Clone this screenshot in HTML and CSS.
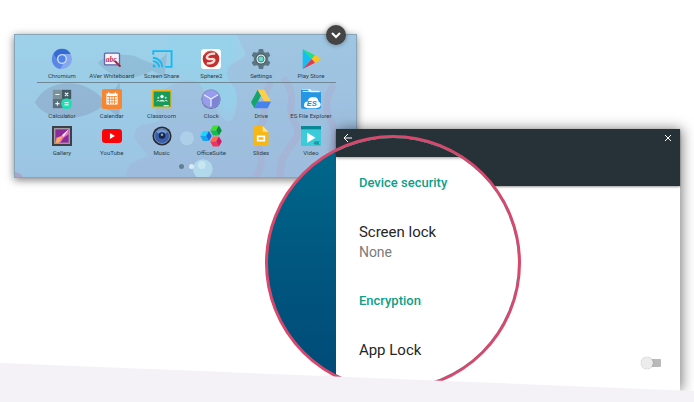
FILE: index.html
```html
<!DOCTYPE html>
<html lang="en">
<head>
    <meta charset="UTF-8">
    <meta name="viewport" content="width=device-width, initial-scale=1.0">
    <title>App launcher and device security</title>
    <link rel="stylesheet" href="styles.css">
</head>
<body>
    <main class="stage">
        <!-- App launcher -->
        <section class="launcher">
            <svg class="wallpaper" viewBox="0 0 343 143" preserveAspectRatio="none" aria-hidden="true">
                <path d="M150 0H223L220 22Q210 40 224 45Q226 78 212 78Q205 58 186 52L160 34Z" fill="#8fd3ee" opacity=".35"/>
                <path d="M223 0H343V143H112C112 125 125 128 134 121C128 112 118 108 121 97C125 87 139 92 146 85C132 68 150 48 174 46C190 44 187 58 198 64C208 88 220 98 223 70C226 46 209 50 214 34C219 24 239 26 229 12Z" fill="#a5a9cf" opacity=".28"/>
                <path d="M20 68C32 44 68 42 88 64Q98 61 105 47Q108 66 104 84Q98 75 86 73C66 88 32 88 20 68Z" fill="#7f8bb0" opacity=".33"/>
                <path d="M83 28Q94 17 120 21Q134 28 139 29Q146 26 153 18Q152 34 150 44Q144 38 138 36Q106 53 83 28Z" fill="#7394b4" opacity=".28"/>
                <g fill="none" stroke="#bd93b9" stroke-width="7" opacity=".2">
                    <path d="M258 48C245 64 254 75 250 86C240 102 242 105 246 116Q251 130 242 143"/>
                    <path d="M270 43C287 64 271 70 281 88C296 105 264 112 267 143"/>
                    <path d="M321 50Q308 70 318 86Q326 105 317 118"/>
                </g>
                <circle cx="173" cy="104" r="7" fill="#b5dced" opacity=".6"/>
                <circle cx="189" cy="135" r="10" fill="#b5deee" opacity=".8"/>
                <circle cx="188" cy="131" r="4" fill="#e0f3f8" opacity=".5"/>
                <path d="M0 138Q6 139 8 143H0Z" fill="#a9a6c8"/>
            </svg>

            <button class="collapse" aria-label="Close launcher">
                <svg viewBox="0 0 20 20"><path d="M6 8l4 4 4-4" fill="none" stroke="#fff" stroke-width="2"/></svg>
            </button>

            <div class="apps favorites">
                <a class="app" href="#chromium">
                    <svg viewBox="0 0 24 24">
                        <circle cx="12" cy="12" r="12" fill="#85a7ed"/>
                        <path d="M1.5 6A12 12 0 0 1 22.5 6H12A6 6 0 0 0 6 13Z" fill="#376bd4"/>
                        <path d="M1.5 6L6.8 15A6 6 0 0 0 13 18L10 24A12 12 0 0 1 1.5 6Z" fill="#5a87e3"/>
                        <circle cx="12" cy="12" r="5.8" fill="#dce8fc"/>
                        <circle cx="12" cy="12" r="4.4" fill="#5082e8"/>
                    </svg>
                    <span>Chromium</span>
                </a>
                <a class="app" href="#whiteboard">
                    <svg viewBox="0 0 24 24">
                        <rect x="3" y="5" width="18" height="14" rx="1" fill="#f5f2fb" stroke="#6366a9" stroke-width="1.6"/>
                        <text x="4.5" y="15" class="abc">abc</text>
                        <path d="M15.5 14.5l6.5 6.5" stroke="#bd2634" stroke-width="2.6"/>
                        <path d="M15 14l2 2M20 19l2 2" stroke="#592c39"/>
                    </svg>
                    <span>AVer Whiteboard</span>
                </a>
                <a class="app" href="#share">
                    <svg viewBox="0 0 24 24" fill="none" stroke="#12baf4" stroke-width="2.2">
                        <path d="M1.5 7V2.5h22v19H16"/>
                        <path d="M1 10.5A11.5 11.5 0 0 1 12.5 22M1 14.5A7.5 7.5 0 0 1 8.5 22"/>
                        <path d="M1 22v-3.5A3.5 3.5 0 0 1 4.5 22Z" fill="#12baf4" stroke="none"/>
                    </svg>
                    <span>Screen Share</span>
                </a>
                <a class="app" href="#sphere">
                    <svg viewBox="0 0 24 24">
                        <rect width="24" height="24" rx="4" fill="#fff"/>
                        <circle cx="12" cy="12" r="10" fill="#c52c2c"/>
                        <path d="M17 5.5Q8 5 7 10Q8 13 14 12Q18 13 14.5 16Q11 18 7 17" fill="none" stroke="#f9ded8" stroke-width="2.8"/>
                        <path d="M4 7Q9 1 15 3" fill="none" stroke="#e97865"/>
                    </svg>
                    <span>Sphere2</span>
                </a>
                <a class="app" href="#settings">
                    <svg viewBox="0 0 24 24">
                        <path d="M9.5 0h5l.8 3.5 2 1.1 3.5-1.1 2.4 4.3-2.6 2.5v3.4l2.6 2.5-2.4 4.3-3.5-1.1-2 1.1-.8 3.5h-5l-.8-3.5-2-1.1-3.5 1.1-2.4-4.3 2.6-2.5v-3.4L.8 7.8l2.4-4.3 3.5 1.1 2-1.1Z" fill="#5b7581"/>
                        <circle cx="12" cy="12" r="6.5" fill="#3b555f"/>
                        <circle cx="12" cy="12" r="5.5" fill="#e5f3f1"/>
                        <circle cx="12" cy="12" r="3.6" fill="#62dec8" stroke="#48636c"/>
                    </svg>
                    <span>Settings</span>
                </a>
                <a class="app" href="#play">
                    <svg viewBox="0 0 24 24">
                        <path d="M2 0v24l11-12Z" fill="#14bef0"/>
                        <path d="M2 0l11 12 5-4Z" fill="#22df87"/>
                        <path d="M2 24l11-12 5 4Z" fill="#e8364e"/>
                        <path d="M13 12l4-5 7 5-7 5Z" fill="#fbc51c"/>
                    </svg>
                    <span>Play Store</span>
                </a>
            </div>

            <div class="apps">
                <a class="app" href="#calculator">
                    <svg viewBox="0 0 24 24">
                        <path d="M1 1h11v11H1Z" fill="#7b929b"/>
                        <path d="M12 1h11v11H12Z" fill="#445964"/>
                        <path d="M1 12h11v11H1Z" fill="#5b707a"/>
                        <path d="M12 12h10v11H12Z" fill="#6c828a"/>
                        <circle cx="17.5" cy="17.5" r="6.5" fill="#1ddfb1"/>
                        <path d="M4 6.5h5M4 17.5h5M6.5 15v5M15.5 4.5l4 4m0-4l-4 4M15 16.3h5M15 19h5" stroke="#e9f4f3" stroke-width="1.3"/>
                    </svg>
                    <span>Calculator</span>
                </a>
                <a class="app" href="#calendar">
                    <svg viewBox="0 0 24 24">
                        <rect width="24" height="24" rx="2" fill="#f78632"/>
                        <path d="M6 6h12v12H6ZM8 4v3M16 4v3" fill="#fff" stroke="#fff" stroke-width="1.4"/>
                        <path d="M6 9h12M6 12.3h12M6 15.5h12M9 9v9M12 9v9M15 9v9" stroke="#f78632"/>
                    </svg>
                    <span>Calendar</span>
                </a>
                <a class="app" href="#classroom">
                    <svg viewBox="0 0 24 24">
                        <rect y="1" width="24" height="22" rx="1" fill="#f0b41a"/>
                        <rect x="2" y="3" width="20" height="18" fill="#169b5c"/>
                        <circle cx="12" cy="9" r="2" fill="#fff"/>
                        <circle cx="7.5" cy="10.5" r="1.3" fill="#b8e0cb"/>
                        <circle cx="16.5" cy="10.5" r="1.3" fill="#b8e0cb"/>
                        <path d="M8 15q4-4 8 0ZM5 15q2-3 4-1M15 14q3-2 4 1" fill="#dcefe4"/>
                        <path d="M14 20h6" stroke="#fff" stroke-width="1.5"/>
                    </svg>
                    <span>Classroom</span>
                </a>
                <a class="app" href="#clock">
                    <svg viewBox="0 0 24 24">
                        <circle cx="12" cy="12.6" r="11.4" fill="#5965a7"/>
                        <circle cx="12" cy="11.7" r="10.8" fill="#969cf0" stroke="#8a93bd" stroke-width="1.4"/>
                        <path d="M12 12v10A10 10 0 0 0 21 7Z" fill="#7d84d5"/>
                        <path d="M3.5 7L12 12l8.5-5M12 12v9" fill="none" stroke="#ebedff" stroke-width="1.5"/>
                    </svg>
                    <span>Clock</span>
                </a>
                <a class="app" href="#drive">
                    <svg viewBox="0 0 24 24">
                        <path d="M8 1l4 7L4 23 0 16Z" fill="#15a56b"/>
                        <path d="M8 1h8l8 14h-8Z" fill="#fdd04b"/>
                        <path d="M8 15h16l-4 8H4Z" fill="#4782ed"/>
                    </svg>
                    <span>Drive</span>
                </a>
                <a class="app" href="#files">
                    <svg viewBox="0 0 24 24">
                        <path d="M1 0h10l2 2h9v5H1Z" fill="#d9f2fd"/>
                        <path d="M0 1h8l3 3h13v17q0 3-3 3H3q-3 0-3-3Z" fill="#2496e4"/>
                        <path d="M2 3h20" stroke="#e8f7fc"/>
                        <path d="M8 23Q2 22 4 18Q4 15 8 15Q9 9 15 10Q20 9 21 15Q26 18 22 22L18 23Z" fill="#fff"/>
                        <text x="7" y="20" class="es">ES</text>
                    </svg>
                    <span>ES File Explorer</span>
                </a>
                <a class="app" href="#gallery">
                    <svg viewBox="0 0 24 24">
                        <rect width="24" height="24" fill="#3f4047"/>
                        <rect x="2.5" y="2.5" width="19" height="19" fill="#a8a3ac"/>
                        <rect x="4" y="4" width="16" height="16" fill="#8d2999"/>
                        <path d="M4 20L5 14 11 12 20 4V10L14 14 10 20Z" fill="#e574c7"/>
                        <path d="M4 20l3-6 6-2-5 8Z" fill="#ffb340"/>
                        <path d="M20 4l-8 7 2 2Z" fill="#fff0f4"/>
                    </svg>
                    <span>Gallery</span>
                </a>
                <a class="app" href="#youtube">
                    <svg viewBox="0 0 24 24">
                        <rect y="3.5" width="24" height="17" rx="4" fill="#f90509"/>
                        <path d="M9.5 8.5v7l6-3.5Z" fill="#fff"/>
                    </svg>
                    <span>YouTube</span>
                </a>
                <a class="app" href="#music">
                    <svg viewBox="0 0 24 24">
                        <circle cx="12" cy="12" r="11.5" fill="#242b35"/>
                        <circle cx="12" cy="12" r="9" fill="#385fae" stroke="#8395b3"/>
                        <path d="M5 7Q11 1 19 7L12 12Z" fill="#7099d7"/>
                        <circle cx="12" cy="11.5" r="4" fill="#172647"/>
                        <circle cx="12" cy="10.5" r="1.5" fill="#92a3bb"/>
                    </svg>
                    <span>Music</span>
                </a>
                <a class="app" href="#office">
                    <svg viewBox="0 0 24 24">
                        <g transform="translate(18 5.5)">
                            <path d="M-7 0l3.5-6h7L0 0Z" fill="#3fe02b"/>
                            <path d="M3.5-6L7 0 3.5 6 0 0Z" fill="#0c8f3c"/>
                            <path d="M-7 0h7l3.5 6h-7Z" fill="#12bb50"/>
                        </g>
                        <g transform="translate(6 12)">
                            <path d="M-7 0l3.5-6h7L0 0Z" fill="#19d8ff"/>
                            <path d="M3.5-6L7 0 3.5 6 0 0Z" fill="#1767e0"/>
                            <path d="M-7 0h7l3.5 6h-7Z" fill="#12a5f2"/>
                        </g>
                        <g transform="translate(18 18.5)">
                            <path d="M-7 0l3.5-6h7L0 0Z" fill="#ff6a4a"/>
                            <path d="M3.5-6L7 0 3.5 6 0 0Z" fill="#cf1c62"/>
                            <path d="M-7 0h7l3.5 6h-7Z" fill="#f0325c"/>
                        </g>
                    </svg>
                    <span>OfficeSuite</span>
                </a>
                <a class="app" href="#slides">
                    <svg viewBox="0 0 24 24">
                        <path d="M5 0h9l7 7v15q0 2-2 2H5q-2 0-2-2V2q0-2 2-2Z" fill="#f7b817"/>
                        <path d="M14 0l7 7h-7Z" fill="#ffe18c"/>
                        <path d="M8 12.5h8v5H8Z" fill="none" stroke="#fff" stroke-width="2"/>
                    </svg>
                    <span>Slides</span>
                </a>
                <a class="app" href="#video">
                    <svg viewBox="0 0 24 24">
                        <rect width="24" height="24" rx="1" fill="#3dcbd9"/>
                        <path d="M0 0h24v4H0Z" fill="#078894"/>
                        <path d="M7.5 8v12l10-6Z" fill="#fff"/>
                        <text x="15" y="23" class="four-k">4K</text>
                    </svg>
                    <span>Video</span>
                </a>
            </div>

            <div class="pages">
                <span class="page current"></span>
                <span class="page"></span>
            </div>
        </section>

        <!-- Security settings window -->
        <section class="window">
            <header class="titlebar">
                <button aria-label="Back">
                    <svg viewBox="0 0 10 10"><path d="M9 5H1.5M5 1L1 5l4 4"/></svg>
                </button>
                <button aria-label="Close">
                    <svg viewBox="0 0 10 10"><path d="M2 2l6 6M8 2l-6 6"/></svg>
                </button>
            </header>
            <div class="window-body">
                <input class="switch" type="checkbox" role="switch" id="appLock">
            </div>

            <!-- Magnified part of the window -->
            <div class="lens">
                <div class="panel">
                    <div class="panel-bar"></div>
                    <div class="options">
                        <h2>Device security</h2>
                        <div>
                            <h3>Screen lock</h3>
                            <p>None</p>
                        </div>
                        <h2>Encryption</h2>
                        <label for="appLock">App Lock</label>
                    </div>
                </div>
            </div>
        </section>

        <div class="slope"></div>
    </main>
</body>
</html>
```
FILE: styles.css
```css
* {
    box-sizing: border-box;
    margin: 0;
    padding: 0;
}

body {
    font-family: Roboto, "Liberation Sans", sans-serif;
    background: #fff;
}

button {
    border: none;
    background: none;
    cursor: pointer;
}

svg {
    display: block;
}

.stage {
    position: relative;
    display: grid;
    grid-template-columns: 48.4% 1fr;
    align-items: start;
    min-height: 100vh;
    padding-bottom: 11px;
    overflow: hidden;
}

/* launcher */
.launcher {
    position: relative;
    grid-area: 1 / 1 / 2 / 3;
    width: 49.4%;
    margin: 34px 0 0 14px;
    padding: 14px 20px 8px 22px;
    background: linear-gradient(#9dd1e9, #9bc4e3);
    border: 1px solid #87a5b8;
    box-shadow: 0 2px 8px rgba(0,0,0,0.5);
}

.wallpaper {
    position: absolute;
    inset: 0;
    width: 100%;
    height: 100%;
}

.collapse {
    position: absolute;
    top: -10px;
    right: 10px;
    width: 20px;
    height: 20px;
    border-radius: 50%;
    background: #444;
    box-shadow: 0 0 5px rgba(0,0,0,0.4);
}

.apps {
    position: relative;
    display: grid;
    grid-template-columns: repeat(6, minmax(0, 1fr));
    row-gap: 6px;
}

.favorites {
    padding-bottom: 2px;
    margin-bottom: 6px;
    border-bottom: 1px solid #708795;
}

.app {
    display: flex;
    flex-direction: column;
    align-items: center;
    gap: 2px;
    color: #2c3d47;
    font-size: 6px;
    line-height: 9px;
    white-space: nowrap;
    text-decoration: none;
}

.app svg {
    width: 20px;
    height: 20px;
    overflow: visible;
}

.abc {
    font: italic bold 9px "Liberation Serif", serif;
    fill: #bf3046;
}

.es {
    font: italic bold 9px "Liberation Sans", sans-serif;
    fill: #168cdc;
}

.four-k {
    font: bold 6px Roboto, sans-serif;
    fill: #078894;
}

.pages {
    position: relative;
    display: flex;
    justify-content: center;
    gap: 5px;
    margin-top: 7px;
}

.page {
    width: 5px;
    height: 5px;
    border-radius: 50%;
    background: #dceaf6;
}

.page.current {
    background: #627f91;
}

/* settings window */
.window {
    position: relative;
    grid-area: 1 / 2 / 2 / 3;
    margin: 129px 14px 0 0;
    background: #fff;
    box-shadow: 2px 0 12px rgba(0,0,0,0.5);
}

.titlebar {
    display: flex;
    justify-content: space-between;
    align-items: flex-start;
    height: 57px;
    padding: 4px 7px;
    background: #263238;
    box-shadow: 0 1px 2px rgba(0,0,0,0.4);
}

.titlebar svg {
    width: 10px;
    height: 10px;
    fill: none;
    stroke: #fff;
}

.window-body {
    display: flex;
    justify-content: flex-end;
    align-items: flex-end;
    min-height: 205px;
    padding: 22px 19px;
}

.switch {
    appearance: none;
    display: flex;
    align-items: center;
    width: 20px;
    height: 12px;
    background: linear-gradient(#b9b9b9, #b9b9b9) right center / 14px 8px no-repeat;
    border-radius: 4px;
    cursor: pointer;
}

.switch::before {
    content: "";
    width: 12px;
    height: 12px;
    border-radius: 50%;
    background: #ececec;
    box-shadow: 0 0 1px rgba(0,0,0,0.4);
}

.switch:checked {
    justify-content: flex-end;
}

.lens {
    position: absolute;
    top: 6px;
    left: -71px;
    width: 256px;
    height: 256px;
    padding-left: 68px;
    border: 3px solid #d9476b;
    border-radius: 50%;
    background: linear-gradient(#006a8b, #005780 50%, #004a78);
    overflow: hidden;
}

.panel {
    height: 100%;
    background: #fff;
}

.panel-bar {
    height: 19px;
    background: #263238;
    box-shadow: 0 1px 3px rgba(0,0,0,0.4);
}

.options {
    display: grid;
    gap: 29px;
    padding: 16px 23px;
    line-height: 20px;
}

.options h2 {
    color: #109e88;
    font-size: 13px;
    font-weight: 500;
    line-height: 20px;
}

.options h3,
.options label {
    color: #262626;
    font-size: 15px;
    font-weight: 400;
}

.options p {
    color: #7b7b7b;
    font-size: 14px;
}

/* slanted start of the next section */
.slope {
    position: absolute;
    left: 0;
    right: 0;
    bottom: 0;
    height: 39px;
    background: #f4f2f7;
    clip-path: polygon(0 0, 100% 28px, 100% 100%, 0 100%);
}
```
